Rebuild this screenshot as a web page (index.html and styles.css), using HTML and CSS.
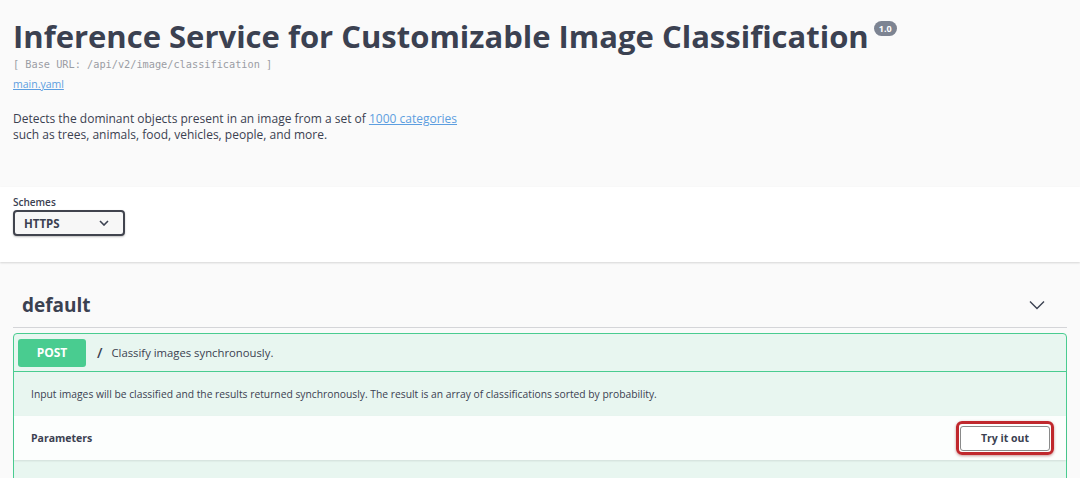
FILE: index.html
```html
<!DOCTYPE html>
<html lang="en">
<head>
<meta charset="utf-8">
<title>Inference Service for Customizable Image Classification</title>
<link rel="stylesheet" href="styles.css">
</head>
<body>
<div class="page">
  <section class="info">
    <div class="title-row">
      <h2 class="title">Inference Service for Customizable Image Classification</h2>
      <span class="version">1.0</span>
    </div>
    <pre class="base-url">[ Base URL: /api/v2/image/classification ]</pre>
    <a class="spec-link" href="#">main.yaml</a>
    <div class="description">
      <p>Detects the dominant objects present in an image from a set of <a href="#">1000 categories</a><br>such as trees, animals, food, vehicles, people, and more.</p>
    </div>
  </section>

  <section class="scheme-container">
    <label class="schemes-label">Schemes</label>
    <div class="select">
      <span>HTTPS</span>
      <svg width="10" height="6" viewBox="0 0 10 6"><path d="M1 1l4 4 4-4" fill="none" stroke="#3b4151" stroke-width="1.6"/></svg>
    </div>
  </section>

  <section class="operations">
    <div class="tag-header">
      <h4 class="tag-name">default</h4>
      <svg class="tag-arrow" width="16" height="10" viewBox="0 0 16 10"><path d="M1 1.5l7 7 7-7" fill="none" stroke="#3b4151" stroke-width="1.4"/></svg>
    </div>
    <div class="opblock">
      <div class="summary">
        <span class="method">POST</span>
        <span class="path">/</span>
        <span class="summary-text">Classify images synchronously.</span>
      </div>
      <div class="op-desc">Input images will be classified and the results returned synchronously. The result is an array of classifications sorted by probability.</div>
      <div class="params-header">
        <h4 class="params-title">Parameters</h4>
        <div class="try-highlight"><button class="try-btn">Try it out</button></div>
      </div>
      <div class="op-rest"></div>
    </div>
  </section>
</div>
</body>
</html>
```
FILE: styles.css
```css
* { box-sizing: border-box; }
html, body { margin: 0; padding: 0; }
body {
  background: #fafafa;
  font-family: "Open Sans", "Noto Sans", sans-serif;
  color: #3b4151;
  width: 1080px;
  height: 478px;
  overflow: hidden;
}
.info {
  padding: 14px 13px 0 13px;
  height: 187px;
}
.title-row {
  display: flex;
  align-items: flex-start;
}
.title {
  margin: 0;
  font-size: 31px;
  font-weight: 700;
  line-height: 44px;
  color: #3b4151;
}
.version {
  margin-top: 7px;
  margin-left: 5px;
  background: #7d8492;
  color: #fff;
  font-size: 9px;
  font-weight: 700;
  border-radius: 8px;
  padding: 1px 5px;
  line-height: 13px;
}
.base-url {
  margin: -1px 0 0 0;
  font-family: "DejaVu Sans Mono", "Liberation Mono", monospace;
  font-size: 10.25px;
  line-height: 14px;
  color: #9a9da4;
}
.spec-link {
  display: block;
  width: max-content;
  margin-top: 6px;
  font-size: 10.5px;
  line-height: 14px;
  color: #5d9ee0;
  text-decoration: underline;
}
.description p {
  margin: 20px 0 0 0;
  font-size: 12px;
  line-height: 16px;
  color: #3b4151;
}
.description a { color: #5d9ee0; }

.scheme-container {
  background: #fff;
  height: 75px;
  padding: 9px 13px 0 13px;
  box-shadow: 0 1px 2px 0 rgba(0,0,0,.15);
  position: relative;
}
.schemes-label {
  display: block;
  font-size: 10px;
  font-weight: 600;
  line-height: 12px;
}
.select {
  margin-top: 2px;
  width: 112px;
  height: 26px;
  border: 2px solid #41444e;
  border-radius: 4px;
  background: #f7f7f7;
  box-shadow: 0 1px 2px 0 rgba(0,0,0,.25);
  display: flex;
  align-items: center;
  justify-content: space-between;
  padding: 0 14px 0 9px;
  font-size: 11.5px;
  font-weight: 700;
}

.operations {
  padding: 0 13px;
}
.tag-header {
  margin-top: 20px;
  height: 46px;
  display: flex;
  align-items: center;
  justify-content: space-between;
  padding: 0 22px 0 9px;
  border-bottom: 1px solid rgba(59,65,81,.2);
}
.tag-name {
  margin: 0;
  font-size: 19px;
  font-weight: 700;
}
.opblock {
  margin-top: 5px;
  border: 1px solid #49cc90;
  border-radius: 4px;
  background: #e8f6f0;
  width: 1054px;
}
.summary {
  display: flex;
  align-items: center;
  height: 38px;
  padding: 0 4px;
  border-bottom: 1px solid #49cc90;
}
.method {
  width: 68px;
  height: 28px;
  background: #49cc90;
  border-radius: 3px;
  color: #fff;
  font-size: 12px;
  font-weight: 700;
  display: flex;
  align-items: center;
  justify-content: center;
}
.path {
  margin-left: 11px;
  font-size: 14px;
  font-weight: 600;
}
.summary-text {
  margin-left: 9px;
  font-size: 11.3px;
}
.op-desc {
  height: 44px;
  padding: 0 17px;
  display: flex;
  align-items: center;
  font-size: 10.3px;
}
.params-header {
  height: 44px;
  background: rgba(255,255,255,.85);
  box-shadow: 0 1px 2px rgba(0,0,0,.1);
  display: flex;
  align-items: center;
  justify-content: space-between;
  padding: 0 12px 0 17px;
}
.params-title {
  margin: 0;
  font-size: 10.5px;
  font-weight: 700;
}
.try-highlight {
  border: 3px solid #c0282d;
  border-radius: 6px;
  padding: 1px;
  box-shadow: 0 1px 3px rgba(120,0,0,.4);
}
.try-btn {
  width: 90px;
  height: 25px;
  border: 1px solid #8a8a8a;
  border-radius: 3px;
  background: #fff;
  font-family: "Open Sans", sans-serif;
  font-size: 10.5px;
  font-weight: 700;
  color: #3b4151;
  padding: 0;
}
.op-rest {
  height: 30px;
}
```
